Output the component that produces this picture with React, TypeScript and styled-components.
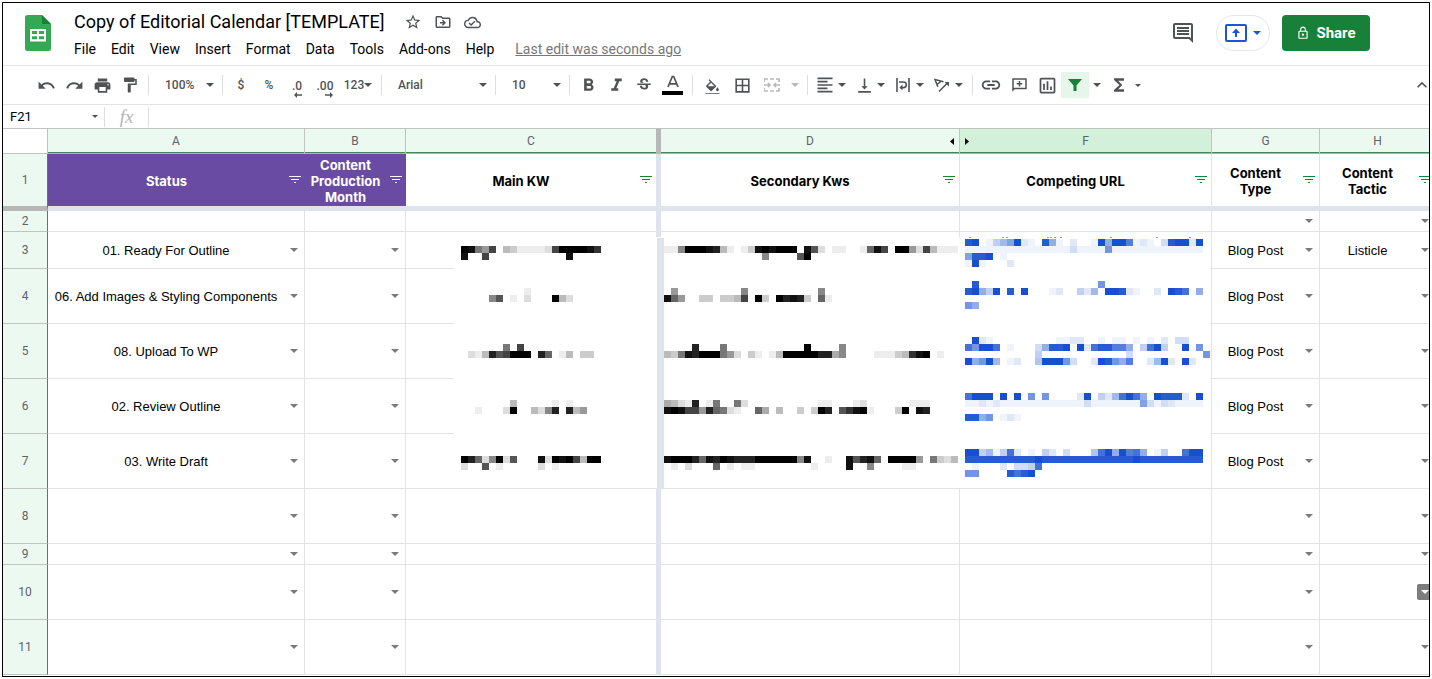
import React from "react";
import styled, { createGlobalStyle, css } from "styled-components";
import {
  MdUndo,
  MdRedo,
  MdPrint,
  MdFormatPaint,
  MdFormatBold,
  MdFormatItalic,
  MdStrikethroughS,
  MdFormatColorFill,
  MdBorderAll,
  MdFormatAlignLeft,
  MdVerticalAlignBottom,
  MdLink,
  MdOutlineInsertChart,
  MdFunctions,
  MdKeyboardArrowUp,
  MdStarBorder,
  MdOutlineDriveFileMove,
  MdOutlineCloudDone,
  MdOutlineInsertComment,
  MdLockOutline,
} from "react-icons/md";

const GlobalStyle = createGlobalStyle`
  *, *::before, *::after { box-sizing: border-box; }
  body { margin: 0; background: #fff; font-family: Roboto, "Liberation Sans", sans-serif; color: #000; }
  button, input, select { font: inherit; color: inherit; }
`;

const ink = "#505356";
const line = "#e2e3e3";
const headerLine = "#c0c4c0";
const green = "#188038";

const Frame = styled.div`
  margin: 2px;
  height: calc(100vh - 4px);
  border: 1px solid #000;
  display: flex;
  flex-direction: column;
  overflow: hidden;
`;

/* ---------- Header ---------- */

const Header = styled.header`
  display: flex;
  align-items: flex-start;
  height: 63px;
  padding: 8px 59px 0 22px;
  border-bottom: 1px solid ${line};
`;

const Logo = styled.svg`
  width: 26px;
  height: 36px;
  margin-top: 4px;
  flex: none;
`;

const Document = styled.div`
  flex: 1;
  padding-left: 23px;
  min-width: 0;
`;

const TitleRow = styled.div`
  display: flex;
  align-items: center;
  height: 22px;
  color: ${ink};
`;

const Title = styled.h1`
  margin: 0 18px 0 0;
  font-family: Roboto, sans-serif;
  font-size: 18px;
  line-height: 22px;
  font-weight: 400;
  color: #000;
  white-space: nowrap;
`;

const PlainButton = styled.button`
  display: inline-flex;
  align-items: center;
  justify-content: center;
  padding: 0;
  border: 0;
  background: none;
  cursor: pointer;
`;

const TitleAction = styled(PlainButton)`
  width: 20px;
  height: 20px;
  margin-right: 10px;
`;

const MenuRow = styled.nav`
  display: flex;
  align-items: center;
  gap: 15px;
  height: 32px;
  font-size: 14px;
  line-height: 20px;
  white-space: nowrap;
`;

const EditLink = styled.a`
  margin-left: 6px;
  color: #777;
  text-decoration: underline;
`;

const HeaderActions = styled.div`
  display: flex;
  align-items: center;
  height: 36px;
  margin-top: 4px;
`;

const CommentButton = styled(PlainButton)`
  width: 28px;
  height: 28px;
  margin-right: 19px;
  color: ${ink};
`;

const PresentButton = styled(PlainButton)`
  gap: 6px;
  width: 54px;
  height: 36px;
  margin-right: 12px;
  border: 1px solid #e4e6e8;
  border-radius: 18px;
  color: #1a56db;
`;

const ShareButton = styled(PlainButton)`
  gap: 6px;
  width: 88px;
  height: 36px;
  border-radius: 4px;
  background: ${green};
  color: #fff;
  font-size: 15px;
  font-weight: 700;
`;

/* ---------- Toolbar ---------- */

const Toolbar = styled.div`
  display: flex;
  align-items: center;
  height: 39px;
  padding-left: 29px;
  border-bottom: 1px solid ${line};
  color: ${ink};
  font-size: 12px;
  font-weight: 500;
`;

const ToolButton = styled(PlainButton)<{ $w?: number; $on?: boolean; $dim?: boolean }>`
  flex: none;
  width: ${(p) => p.$w ?? 28}px;
  height: 26px;
  background: ${(p) => (p.$on ? "#e6f6ea" : "none")};
  opacity: ${(p) => (p.$dim ? 0.4 : 1)};
`;

const Split = styled.span`
  flex: none;
  display: flex;
  width: 39px;
`;

const Divider = styled.span`
  flex: none;
  width: 1px;
  height: 20px;
  margin: 0 4px;
  background: #dcdee0;
`;

const SelectBox = styled.label<{ $w: number }>`
  flex: none;
  display: flex;
  align-items: center;
  width: ${(p) => p.$w}px;
  padding: 0 4px 0 12px;
`;

const Select = styled.select`
  flex: 1;
  min-width: 0;
  padding: 0;
  border: 0;
  background: none;
  appearance: none;
`;

const CollapseButton = styled(PlainButton)`
  width: 20px;
  margin-left: auto;
  margin-right: -3px;
`;

const DecimalLabel = styled.span`
  display: flex;
  flex-direction: column;
  align-items: flex-end;
  padding-top: 7px;
  line-height: 12px;
`;

/* ---------- Formula bar ---------- */

const FormulaBar = styled.div`
  display: flex;
  align-items: center;
  height: 24px;
  border-bottom: 1px solid ${headerLine};
  font-size: 13px;
`;

const NameBox = styled.label`
  display: flex;
  align-items: center;
  width: 97px;
  padding: 0 2px 0 7px;
  color: ${ink};
`;

const NameInput = styled.input`
  flex: 1;
  min-width: 0;
  padding: 0;
  border: 0;
  background: none;
  color: #000;
`;

const FxLabel = styled.span`
  width: 35px;
  text-align: center;
  font-family: "Liberation Serif", serif;
  font-size: 19px;
  line-height: 20px;
  font-style: italic;
  color: #b4b6b8;
`;

const FormulaInput = styled.input`
  flex: 1;
  border: 0;
  outline: 0;
`;

/* ---------- Sheet ---------- */

const Sheet = styled.main`
  position: relative;
  flex: 1;
  overflow: hidden;
`;

const Table = styled.table`
  width: 1433px;
  table-layout: fixed;
  border-collapse: separate;
  border-spacing: 0;
`;

const Row = styled.tr<{ $h: number }>`
  height: ${(p) => p.$h}px;
`;

const headingText = css`
  padding: 0;
  font-size: 12px;
  line-height: 14px;
  font-weight: 400;
  color: #5f6368;
`;

const Corner = styled.td`
  padding: 0;
  border-right: 1px solid ${headerLine};
  border-bottom: 1px solid ${headerLine};
`;

const ColumnHead = styled.th<{ $active?: boolean; $frozen?: boolean }>`
  ${headingText}
  background: ${(p) => (p.$active ? "#d2f0da" : "#ecf9f0")};
  border-right: ${(p) => (p.$frozen ? "5px solid #b7b7b7" : `1px solid ${headerLine}`)};
  border-bottom: 1px solid #8cc7a0;
  box-shadow: inset 0 -1px 0 #3f8a5c;
`;

const ColumnHeadInner = styled.div`
  display: grid;
  grid-template-columns: 14px 1fr 14px;
  align-items: center;
  justify-items: center;
`;

const RowHead = styled.th<{ $frozen?: boolean }>`
  ${headingText}
  background: #ecf9f0;
  border-right: 1px solid #3f8a5c;
  border-bottom: ${(p) => (p.$frozen ? "5px solid #b7b7b7" : `1px solid ${headerLine}`)};
`;

const Cell = styled.td<{ $frozenCol?: boolean; $frozenRow?: boolean; $purple?: boolean }>`
  padding: 0;
  background: ${(p) => (p.$purple ? "#6a4ba3" : "#fff")};
  border-right: ${(p) =>
    p.$frozenCol ? "5px solid #dfe3ec" : p.$purple ? "0" : `1px solid ${line}`};
  border-bottom: ${(p) => (p.$frozenRow ? "5px solid #dfe3ec" : `1px solid ${line}`)};
  background-clip: padding-box;
`;

const CellInner = styled.div`
  display: flex;
  align-items: center;
`;

const CellText = styled.span<{ $heading?: boolean; $light?: boolean }>`
  flex: 1;
  padding-top: 2px;
  text-align: center;
  font-family: ${(p) => (p.$heading ? "Inter, sans-serif" : '"Liberation Sans", Arial, sans-serif')};
  font-size: 13px;
  line-height: 16px;
  font-weight: ${(p) => (p.$heading ? 700 : 400)};
  color: ${(p) => (p.$light ? "#fff" : "#000")};
  white-space: ${(p) => (p.$heading ? "pre-line" : "nowrap")};
`;

const CellButton = styled(PlainButton)<{ $tone: string }>`
  flex: none;
  width: 20px;
  height: 16px;
  color: ${(p) => p.$tone};
`;

const Chip = styled.span`
  display: flex;
  align-items: center;
  justify-content: center;
  width: 16px;
  height: 16px;
  border-radius: 2px;
  background: #7d7d7d;
  color: #fff;
`;

const Mosaic = styled.svg`
  position: absolute;
  left: 451px;
  top: 108px;
  width: 756px;
  height: 251px;
  background: #fff;
`;

/* ---------- Drawings ---------- */

const Caret = ({ w = 8 }: { w?: number }) => (
  <svg width={w} height={w / 2} viewBox="0 0 8 4" aria-hidden="true">
    <path d="M0 0h8L4 4z" fill="currentColor" />
  </svg>
);

const FilterLines = () => (
  <svg width="12" height="8" viewBox="0 0 12 8" aria-hidden="true">
    <path d="M0 .5h12M2 3.5h8M5 6.5h2" stroke="currentColor" strokeWidth="1.2" />
  </svg>
);

const Arrow = ({ left }: { left?: boolean }) => (
  <svg width="4" height="7" viewBox="0 0 4 7" aria-hidden="true">
    <path d={left ? "M4 0v7L0 3.500z" : "M0 0v7l4-3.500z"} fill="#000" />
  </svg>
);

const Decimal = ({ text, right }: { text: string; right?: boolean }) => (
  <DecimalLabel>
    {text}
    <svg width="8" height="6" viewBox="0 0 8 6" aria-hidden="true">
      <path d={right ? "M0 2.200h5V0l3 3-3 3V3.800H0z" : "M8 2.200H3V0L0 3l3 3V3.800h5z"} fill="currentColor" />
    </svg>
  </DecimalLabel>
);

const MergeIcon = () => (
  <svg width="16" height="14" viewBox="0 0 16 14" fill="none" stroke="currentColor" strokeWidth="1.700" aria-hidden="true">
    <path d="M0 4V1h4M6 1h4M12 1h3v3M0 10v3h4M6 13h4M12 13h3v-3M0 7h5M11 7h5M4 5l2 2-2 2M12 5l-2 2 2 2" />
  </svg>
);

const WrapIcon = () => (
  <svg width="14" height="14" viewBox="0 0 14 14" fill="none" stroke="currentColor" strokeWidth="1.600" aria-hidden="true">
    <path d="M1 0v14M13 0v14M3 4h4.500a2.800 2.800 0 0 1 0 5.600H5" />
    <path d="M6.500 6.600v6L3.400 9.600z" fill="currentColor" stroke="none" />
  </svg>
);

const RotateIcon = () => (
  <svg width="16" height="15" viewBox="0 0 16 15" fill="none" stroke="currentColor" strokeWidth="1.500" aria-hidden="true">
    <path d="M3.800 8.800L1 1.500l8.500 2.300M3.800 8.800L1 1.500M3 6.500L7.200 3.200M5 13.500L13 5.500" />
    <path d="M10.500 4H15v4.500z" fill="currentColor" stroke="none" />
  </svg>
);

const AddCommentIcon = () => (
  <svg width="15" height="14" viewBox="0 0 15 14" fill="none" stroke="currentColor" strokeWidth="1.500" aria-hidden="true">
    <path d="M1 12V1h13v9.500H2.500zM7.500 3v5.500M4.700 5.700h5.600" />
  </svg>
);

const FunnelIcon = () => (
  <svg width="14" height="12" viewBox="0 0 14 12" aria-hidden="true">
    <path d="M0 0h14L8.500 6.500V12h-3V6.500z" fill={green} />
  </svg>
);

const TextColorIcon = () => (
  <svg width="22" height="20" viewBox="0 0 22 20" aria-hidden="true">
    <path d="M6 12L10.300 1.500h1.400L16 12M7.500 8.800h7" fill="none" stroke="currentColor" strokeWidth="1.700" />
    <path d="M0 16h21v4H0z" fill="#000" />
  </svg>
);

const PresentIcon = () => (
  <svg width="22" height="18" viewBox="0 0 22 18" fill="none" stroke="currentColor" strokeWidth="2" aria-hidden="true">
    <rect x="1" y="1" width="20" height="16" rx="1" />
    <path d="M11 13V7" />
    <path d="M11 4.500L7 9h8z" fill="currentColor" stroke="none" />
  </svg>
);

/* Each run is a start column, a top edge, and one hex digit of intensity per 7px tile. */
type Run = [number, number, string];

const grayRuns: Run[] = [
  [1, 246, "fe86b.4311112bffffec"],
  [1, 253, "e..b...........e"],
  [1, 288, ".........1"],
  [1, 295, "....7a.1.2...f42"],
  [1, 344, "......8.b"],
  [1, 351, ".214dabfff.d9.14.33"],
  [1, 400, ".......4.....1.1"],
  [1, 407, "..1...2f..427d.d46"],
  [1, 456, "fd927f2a...e2fefb4ff"],
  [1, 463, "2..a.1.....2.1"],
  [30, 246, "117fffed41.13efefff.ea2.11..19eb.ff62b4111"],
  [30, 253, "..............7....af"],
  [30, 288, ".6.........7..........7"],
  [30, 295, "e96..33.334b.f3.fded3.91"],
  [30, 344, "....d...8...........f....7"],
  [30, 351, "438edfff862.31.14fffffdd57....11134cef.1"],
  [30, 400, "5421d.18..82..........11...12......111"],
  [30, 407, "efebb6d9821..95.4..3.3fd.acef1...3f.ed"],
  [30, 456, "efffd9edfedddffffff7e..1..eade9.ffff6.8324"],
  [30, 463, ".1.2...9.1.11........1....e..7....11"],
];

const blueRuns: Run[] = [
  [73, 239, "ef.1468f21.e71.2..1f7ffb121.3eff2f"],
  [73, 246, "1111111111111113111191111111111111"],
  [73, 253, "8eef.1"],
  [73, 260, "1f1...2"],
  [73, 281, ".e.................9"],
  [73, 288, "ef74f.e.f...12..426.ffe21..2.fec.7"],
  [73, 302, "97"],
  [73, 337, ".f21.........1122..1.11.1.1.2.33"],
  [73, 344, "c9ffc.1...37eef.f2ceebb7.4cf4..f.9"],
  [73, 351, "..........4............3..........9"],
  [73, 358, "f79f6.12..5fff93..2fe97b..26f2.f2"],
  [73, 393, "cfff.f.f.9.9....2f.426cfc7.feee2.f"],
  [73, 400, "1121211111111111131111111831321111"],
  [73, 414, "ee79.121"],
  [73, 449, "ff4614c2.1.42.3...5cf7fbc7.14..cff"],
  [73, 456, "eeeeeeeeeefeeeeeeeeeeeeefeeeeeeeee"],
  [73, 463, ".1...2.334c"],
  [73, 470, "99....ecef"],
];

const tiles = (runs: Run[], color: string) =>
  runs.flatMap(([col, y, digits]) =>
    [...digits].map((d, i) =>
      d === "." ? null : (
        <rect
          key={`${col}-${y}-${i}`}
          x={(col + i) * 7}
          y={y - 237}
          width="7"
          height="7"
          fill={color}
          fillOpacity={d === "1" ? 0.07 : parseInt(d, 16) / 15}
        />
      ),
    ),
  );

const specks = [515, 548, 552, 593, 596, 600, 606, 656, 702, 735];

const Redactions = () => (
  <Mosaic viewBox="0 0 756 251" shapeRendering="crispEdges" aria-hidden="true">
    <rect x="203" y="1" width="7" height="250" fill="#dfe3ec" />
    {specks.map((x) => (
      <rect key={x} x={x} y="0" width="2" height="1" fill="#8fa0c0" />
    ))}
    {tiles(grayRuns, "#000")}
    {tiles(blueRuns, "#174fce")}
  </Mosaic>
);

/* ---------- Data ---------- */

const menus = ["File", "Edit", "View", "Insert", "Format", "Data", "Tools", "Add-ons", "Help"];
const letters = ["A", "B", "C", "D", "F", "G", "H"];
const widths = [45, 257, 101, 255, 299, 252, 108, 116];
const titles = [
  "Status",
  "Content\nProduction\nMonth",
  "Main KW",
  "Secondary Kws",
  "Competing URL",
  "Content\nType",
  "Content\nTactic",
];

type RowData = { n: number; h: number; status?: string; type?: string; tactic?: string };
const rows: RowData[] = [
  { n: 2, h: 21 },
  { n: 3, h: 37, status: "01. Ready For Outline", type: "Blog Post", tactic: "Listicle" },
  { n: 4, h: 55, status: "06. Add Images & Styling Components", type: "Blog Post" },
  { n: 5, h: 55, status: "08. Upload To WP", type: "Blog Post" },
  { n: 6, h: 55, status: "02. Review Outline", type: "Blog Post" },
  { n: 7, h: 55, status: "03. Write Draft", type: "Blog Post" },
  { n: 8, h: 55 },
  { n: 9, h: 21 },
  { n: 10, h: 55 },
  { n: 11, h: 55 },
];

const cellValue = (row: RowData, letter: string) =>
  letter === "A" ? row.status : letter === "G" ? row.type : letter === "H" ? row.tactic : undefined;

const hasDropdown = (row: RowData, letter: string) =>
  row.n === 2 ? "GH".includes(letter) : "ABGH".includes(letter);

/* ---------- Page ---------- */

const SplitTool = ({ label, children }: { label: string; children: React.ReactNode }) => (
  <Split>
    <ToolButton $w={26} aria-label={label}>{children}</ToolButton>
    <ToolButton $w={8} aria-label={`${label} options`}><Caret /></ToolButton>
  </Split>
);

export default function App() {
  return (
    <>
      <GlobalStyle />
      <Frame>
        <Header>
          <Logo viewBox="0 0 26 36" aria-hidden="true">
            <path d="M2.500 0H17l9 9v24.500a2.500 2.500 0 0 1-2.500 2.500h-21A2.500 2.500 0 0 1 0 33.500v-31A2.500 2.500 0 0 1 2.500 0z" fill="#34a853" />
            <path d="M17 0l9 9h-9z" fill="#188038" />
            <path d="M5 14h16v12.500H5zM7 16v3h5v-3zM14 16v3h5v-3zM7 21.300v3h5v-3zM14 21.300v3h5v-3z" fill="#fff" fillRule="evenodd" />
          </Logo>
          <Document>
            <TitleRow>
              <Title>Copy of Editorial Calendar [TEMPLATE]</Title>
              <TitleAction aria-label="Star"><MdStarBorder size={18} /></TitleAction>
              <TitleAction aria-label="Move"><MdOutlineDriveFileMove size={18} /></TitleAction>
              <TitleAction aria-label="Saved to Drive"><MdOutlineCloudDone size={17} /></TitleAction>
            </TitleRow>
            <MenuRow>
              {menus.map((m) => (
                <PlainButton key={m}>{m}</PlainButton>
              ))}
              <EditLink href="#history">Last edit was seconds ago</EditLink>
            </MenuRow>
          </Document>
          <HeaderActions>
            <CommentButton aria-label="Comments"><MdOutlineInsertComment size={24} /></CommentButton>
            <PresentButton aria-label="Present"><PresentIcon /><Caret /></PresentButton>
            <ShareButton><MdLockOutline size={14} />Share</ShareButton>
          </HeaderActions>
        </Header>

        <Toolbar>
          <ToolButton aria-label="Undo"><MdUndo size={19} /></ToolButton>
          <ToolButton aria-label="Redo"><MdRedo size={19} /></ToolButton>
          <ToolButton aria-label="Print"><MdPrint size={19} /></ToolButton>
          <ToolButton aria-label="Paint format"><MdFormatPaint size={18} /></ToolButton>
          <Divider />
          <SelectBox $w={65}>
            <Select aria-label="Zoom" defaultValue="100%"><option>100%</option></Select>
            <Caret />
          </SelectBox>
          <Divider />
          <ToolButton>$</ToolButton>
          <ToolButton>%</ToolButton>
          <ToolButton aria-label="Decrease decimal places"><Decimal text=".0" /></ToolButton>
          <ToolButton aria-label="Increase decimal places"><Decimal text=".00" right /></ToolButton>
          <ToolButton $w={38}>123<Caret /></ToolButton>
          <Divider />
          <SelectBox $w={105}>
            <Select aria-label="Font" defaultValue="Arial"><option>Arial</option></Select>
            <Caret />
          </SelectBox>
          <Divider />
          <SelectBox $w={65}>
            <Select aria-label="Font size" defaultValue="10"><option>10</option></Select>
            <Caret />
          </SelectBox>
          <Divider />
          <ToolButton aria-label="Bold"><MdFormatBold size={21} /></ToolButton>
          <ToolButton aria-label="Italic"><MdFormatItalic size={21} /></ToolButton>
          <ToolButton aria-label="Strikethrough"><MdStrikethroughS size={18} /></ToolButton>
          <ToolButton $w={30} aria-label="Text color"><TextColorIcon /></ToolButton>
          <Divider />
          <ToolButton $w={30} aria-label="Fill color"><MdFormatColorFill size={17} viewBox="0 -3 24 24" /></ToolButton>
          <ToolButton $w={30} aria-label="Borders"><MdBorderAll size={19} /></ToolButton>
          <ToolButton $w={30} $dim aria-label="Merge cells"><MergeIcon /></ToolButton>
          <ToolButton $w={16} $dim aria-label="Merge options"><Caret /></ToolButton>
          <Divider />
          <SplitTool label="Horizontal align"><MdFormatAlignLeft size={20} /></SplitTool>
          <SplitTool label="Vertical align"><MdVerticalAlignBottom size={19} /></SplitTool>
          <SplitTool label="Text wrapping"><WrapIcon /></SplitTool>
          <SplitTool label="Text rotation"><RotateIcon /></SplitTool>
          <Divider />
          <ToolButton aria-label="Insert link"><MdLink size={22} /></ToolButton>
          <ToolButton aria-label="Insert comment"><AddCommentIcon /></ToolButton>
          <ToolButton aria-label="Insert chart"><MdOutlineInsertChart size={21} /></ToolButton>
          <ToolButton $on aria-label="Filter"><FunnelIcon /></ToolButton>
          <ToolButton $w={16} aria-label="Filter views"><Caret /></ToolButton>
          <ToolButton aria-label="Functions"><MdFunctions size={20} /></ToolButton>
          <ToolButton $w={9} aria-label="Function list"><Caret w={6} /></ToolButton>
          <CollapseButton aria-label="Hide menus"><MdKeyboardArrowUp size={20} /></CollapseButton>
        </Toolbar>

        <FormulaBar>
          <NameBox>
            <NameInput aria-label="Name box" defaultValue="F21" />
            <Caret w={6} />
          </NameBox>
          <Divider />
          <FxLabel>fx</FxLabel>
          <Divider />
          <FormulaInput aria-label="Formula" />
        </FormulaBar>

        <Sheet>
          <Table>
            <colgroup>
              {widths.map((w, i) => (
                <col key={i} width={w} />
              ))}
            </colgroup>
            <thead>
              <Row $h={25}>
                <Corner />
                {letters.map((l) => (
                  <ColumnHead key={l} scope="col" $active={l === "F"} $frozen={l === "C"}>
                    <ColumnHeadInner>
                      <span>{l === "F" && <Arrow />}</span>
                      <span>{l}</span>
                      <span>{l === "D" && <Arrow left />}</span>
                    </ColumnHeadInner>
                  </ColumnHead>
                ))}
              </Row>
            </thead>
            <tbody>
              <Row $h={57}>
                <RowHead scope="row" $frozen>1</RowHead>
                {titles.map((t, i) => (
                  <Cell key={t} $purple={i < 2} $frozenRow $frozenCol={i === 2}>
                    <CellInner>
                      <CellText $heading $light={i < 2}>{t}</CellText>
                      <CellButton $tone={i < 2 ? "#fff" : green} aria-label={`Filter ${t}`}>
                        <FilterLines />
                      </CellButton>
                    </CellInner>
                  </Cell>
                ))}
              </Row>
              {rows.map((row) => (
                <Row key={row.n} $h={row.h}>
                  <RowHead scope="row">{row.n}</RowHead>
                  {letters.map((l) => (
                    <Cell key={l} $frozenCol={l === "C"}>
                      {hasDropdown(row, l) && (
                        <CellInner>
                          <CellText>{cellValue(row, l)}</CellText>
                          <CellButton $tone="#7a7a7a" aria-label={`Choose ${l}${row.n}`}>
                            {row.n === 10 && l === "H" ? <Chip><Caret /></Chip> : <Caret />}
                          </CellButton>
                        </CellInner>
                      )}
                    </Cell>
                  ))}
                </Row>
              ))}
            </tbody>
          </Table>
          <Redactions />
        </Sheet>
      </Frame>
    </>
  );
}
